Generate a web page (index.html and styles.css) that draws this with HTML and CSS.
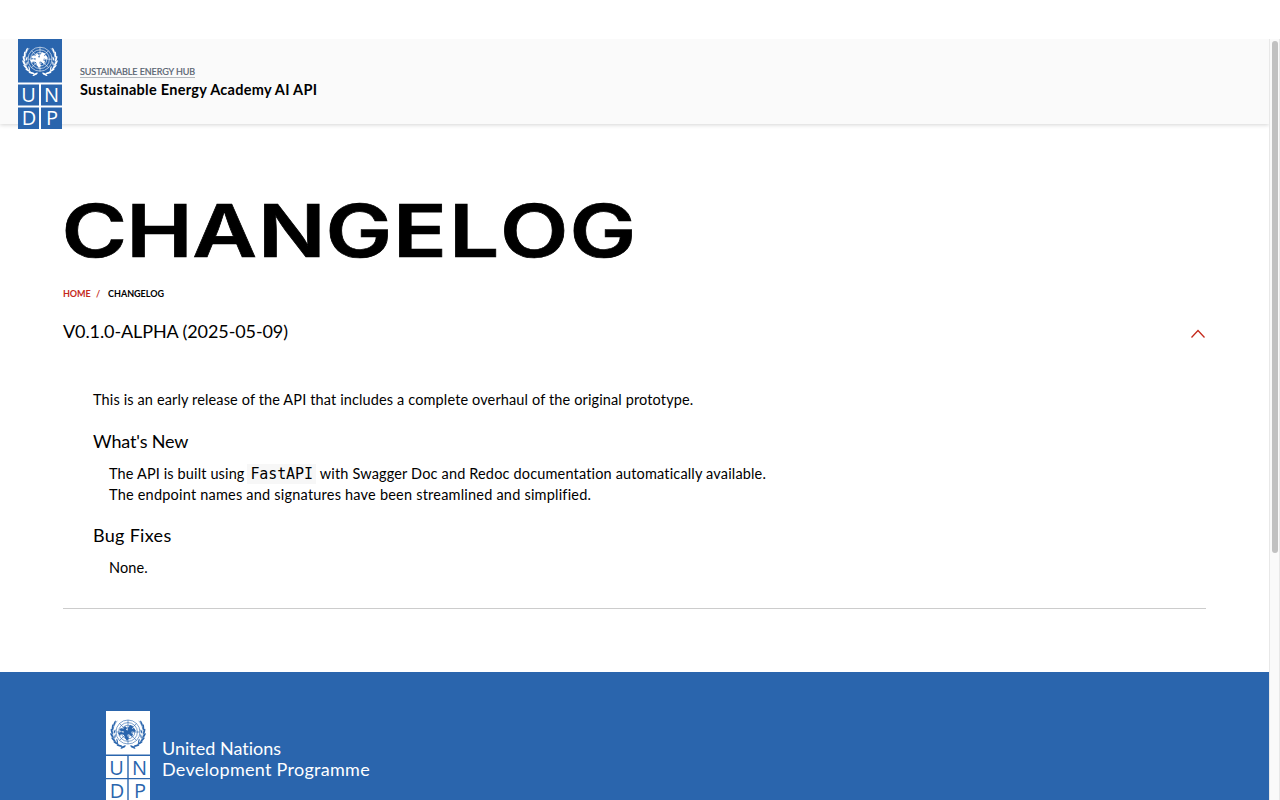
FILE: index.html
```html
<!DOCTYPE html>
<html lang="en">
<head>
<meta charset="utf-8">
<title>Changelog</title>
<link rel="stylesheet" href="styles.css">
</head>
<body>
<svg class="defs" aria-hidden="true">
  <defs>
    <g id="branch" fill="currentColor">
      <path d="M-3 15.2C-10.500 14.500-15.500 8.500-15.300 1C-15.200-4-13.500-8-10.800-11.200" fill="none" stroke="currentColor" stroke-width=".5"/>
      <ellipse cx="-4.800" cy="15" rx="3" ry=".9" transform="rotate(-30 -4.800 15)"/>
      <ellipse cx="-8.500" cy="13.600" rx="3" ry=".9" transform="rotate(12 -8.500 13.600)"/>
      <ellipse cx="-12" cy="11" rx="3" ry=".9" transform="rotate(30 -12 11)"/>
      <ellipse cx="-14.500" cy="7.700" rx="3" ry=".9" transform="rotate(45 -14.500 7.700)"/>
      <ellipse cx="-16" cy="3.700" rx="3" ry=".9" transform="rotate(58 -16 3.700)"/>
      <ellipse cx="-16.200" cy="-.5" rx="3" ry=".9" transform="rotate(75 -16.200 -.5)"/>
      <ellipse cx="-15.300" cy="-4.800" rx="3" ry=".9" transform="rotate(92 -15.300 -4.800)"/>
      <ellipse cx="-13.500" cy="-8.700" rx="3" ry=".8" transform="rotate(112 -13.500 -8.700)"/>
      <ellipse cx="-13" cy="4.500" rx="2.200" ry=".6" transform="rotate(100 -13 4.500)"/>
      <ellipse cx="-13.400" cy="-.5" rx="2.200" ry=".6" transform="rotate(110 -13.400 -.5)"/>
      <ellipse cx="-10.800" cy="9" rx="2.200" ry=".6" transform="rotate(75 -10.800 9)"/>
    </g>
    <g id="emblem">
      <g fill="none" stroke="currentColor" stroke-width=".6">
        <circle r="12"/><circle r="9.400"/><circle r="6.800"/><circle r="4.200"/><circle r="1.800"/>
        <path d="M0-12V12M-12 0H12M-8.500-8.500L8.500 8.500M-8.500 8.500L8.500-8.500"/>
      </g>
      <path fill="currentColor" d="M-9-2L-7-4L-5-3L-3-6L-1-4L-2-2L0-1L0-4L2-7L5-6L4-3L6-4L8-1L6 0L4-1L3 1L5 2L4 5L2 3L0 2L-1 4L1 6L-1 9L-3 6L-4 3L-7 2L-8 4L-10 1L-7 0L-4 1L-4-1L-7-1Z"/>
      <use href="#branch"/>
      <use href="#branch" transform="scale(-1 1)"/>
    </g>
  </defs>
</svg>
<div class="window">
  <div class="page">
    <header class="header">
      <svg class="logo" viewBox="0 0 44 90">
        <path class="logo-gap" d="M0 0H44V90H0Z"/>
        <path class="logo-tile" d="M0 0H44V43.500H0ZM0 45.500H21V66.500H0ZM23 45.500H44V66.500H23ZM0 68.500H21V90H0ZM23 68.500H44V90H23Z"/>
        <g class="logo-ink" transform="translate(22 20.200)"><use href="#emblem"/></g>
        <g class="logo-ink logo-text"><text x="10.500" y="63">U</text><text x="33.500" y="63">N</text><text x="11" y="86">D</text><text x="34" y="86">P</text></g>
      </svg>
      <div class="titles">
        <a class="hub">SUSTAINABLE ENERGY HUB</a>
        <div class="site">Sustainable Energy Academy AI API</div>
      </div>
    </header>
    <main class="main">
      <h1 class="title"><svg class="title-art" width="580" height="70" viewBox="0 0 580 70"><text class="title-text" transform="scale(1.22 1)" y="60.500" x="-1.200" dx="0 -1.600 -1 0 -1 0 .8 1.900 0">CHANGELOG</text></svg></h1>
      <nav class="crumbs"><a class="crumb-home">HOME</a><span class="crumb-sep">/</span><span>CHANGELOG</span></nav>
      <section class="entry">
        <div class="entry-head">
          <h2 class="version">V0.1.0-ALPHA (2025-05-09)</h2>
          <svg class="chevron" width="16" height="10" viewBox="0 0 16 10"><path d="M1.500 8.500L8 1.500L14.500 8.500"/></svg>
        </div>
        <div class="entry-body">
          <p class="intro">This is an early release of the API that includes a complete overhaul of the original prototype.</p>
          <h3 class="sub">What's New</h3>
          <ul class="list">
            <li>The API is built using <code class="code">FastAPI</code> <span class="tail">with Swagger Doc and Redoc documentation automatically available.</span></li>
            <li class="wide">The endpoint names and signatures have been streamlined and simplified.</li>
          </ul>
          <h3 class="sub sub-fixes">Bug Fixes</h3>
          <ul class="list"><li>None.</li></ul>
        </div>
      </section>
    </main>
    <footer class="footer">
      <svg class="logo logo-inverse" viewBox="0 0 44 90">
        <path class="logo-tile" d="M0 0H44V43.500H0ZM0 45H21.300V67H0ZM22.700 45H44V67H22.700ZM0 68.300H21.300V90H0ZM22.700 68.300H44V90H22.700Z"/>
        <g class="logo-ink" transform="translate(22 21)"><use href="#emblem"/></g>
        <g class="logo-ink logo-text"><text x="10.500" y="63.500">U</text><text x="33.500" y="63.500">N</text><text x="11" y="86.500">D</text><text x="34" y="86.500">P</text></g>
      </svg>
      <div class="org">United Nations<br><span class="org-long">Development Programme</span></div>
    </footer>
  </div>
  <div class="track"><div class="thumb"></div></div>
</div>
</body>
</html>
```
FILE: styles.css
```css
* { box-sizing: border-box; }
body { margin: 0; height: 800px; overflow: hidden; background: #fff; color: #000; font-family: Lato, "Noto Sans", sans-serif; font-variant-ligatures: none; }
h1, h2, h3, p, ul { margin: 0; padding: 0; font-weight: 400; }
.defs { position: absolute; width: 0; height: 0; }
.window { display: flex; height: 800px; padding-top: 39px; }
.page { flex: 1; display: flex; flex-direction: column; overflow: hidden; }
.header { display: flex; flex: none; height: 85px; padding-left: 18px; background: #fafafa; box-shadow: 0 1px 4px rgba(0,0,0,.17); }
.logo { width: 44px; height: 90px; flex: none; color: #fff; }
.logo-gap { fill: #fff; }
.logo-tile { fill: #2a65ad; }
.logo-ink { fill: currentColor; }
.logo-text { font: 400 20px "Open Sans", sans-serif; text-anchor: middle; }
.titles { padding: 26px 0 0 18px; }
.hub { display: block; width: 115px; height: 13px; border-bottom: 1px solid #b5b9be; color: #55606e; font-size: 9px; letter-spacing: -.08px; line-height: 13px; -webkit-text-stroke: .2px #55606e; white-space: nowrap; }
.site { margin-top: 3px; font-size: 14.500px; font-weight: 700; letter-spacing: .28px; line-height: 18px; white-space: nowrap; }
.main { flex: none; height: 548px; padding: 72px 63px 0; }
.title { height: 70px; }
.title-art { display: block; overflow: visible; }
.title-text { font: 600 73px Inter, sans-serif; letter-spacing: .8px; stroke: #000; stroke-width: .7; }
.crumbs { display: flex; margin-top: 21px; font-size: 9px; font-weight: 700; line-height: 14px; }
.crumb-home, .crumb-sep { color: #c52a1c; }
.crumb-home { width: 33px; letter-spacing: -.1px; }
.crumb-sep { width: 12px; }
.entry { margin: 18px 0 0; height: 290px; border-bottom: 1px solid #ccc; }
.entry-head { display: flex; justify-content: space-between; align-items: center; height: 25px; }
.version { font-size: 18px; letter-spacing: -.1px; line-height: 25px; }
.chevron { fill: none; stroke: #c52a1c; stroke-width: 1.300; margin-top: 4px; }
.entry-body { padding: 45px 0 0 30px; font-size: 14.500px; line-height: 21px; letter-spacing: .13px; }
.sub { margin-top: 19px; font-size: 18px; line-height: 24px; letter-spacing: -.15px; }
.sub-fixes { margin-top: 18px; letter-spacing: .3px; }
.list { margin: 10px 0 0 16px; list-style: none; }
.list li { height: 21px; }
.list .wide { letter-spacing: .21px; }
.tail { letter-spacing: .16px; }
.code { margin: 0 0 0 -1px; padding: 1px 3px; background: #f7f7f7; font: 15px "DejaVu Sans Mono", monospace; letter-spacing: -.1px; }
.footer { display: flex; flex: 1; padding: 39px 0 0 106px; background: #2a65ad; color: #fff; }
.logo-inverse { color: #2a65ad; }
.logo-inverse .logo-tile { fill: #fff; }
.org { padding: 27px 0 0 12px; font-size: 18px; line-height: 21px; }
.org-long { letter-spacing: .28px; }
.track { width: 11px; background: #fafafa; border: solid #e8e8e8; border-width: 0 1px; padding: 2px 1px 0 2px; }
.thumb { width: 6px; height: 512px; border-radius: 3px; background: #c1c1c1; }
```
